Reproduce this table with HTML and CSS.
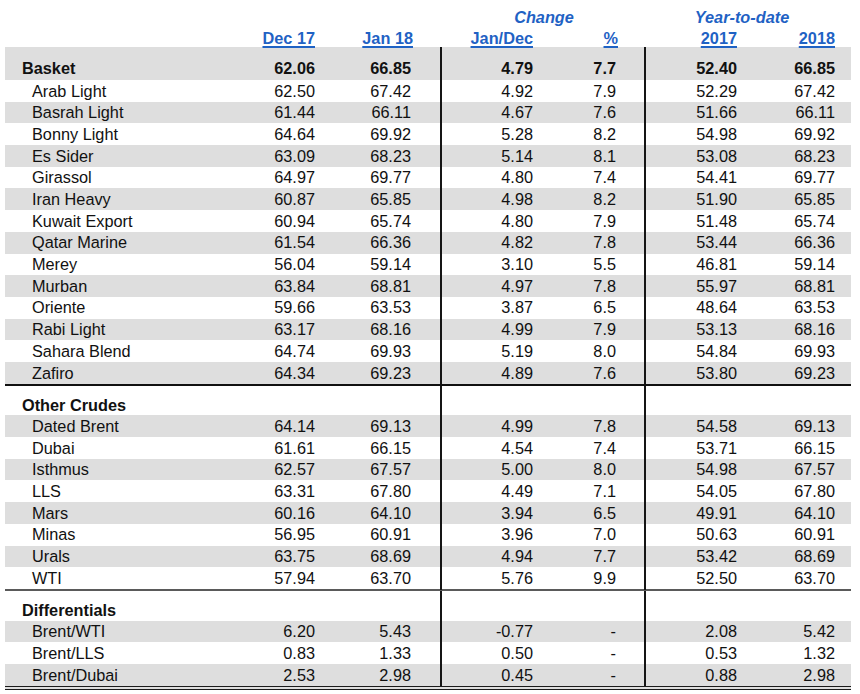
FILE: index.html
```html
<!DOCTYPE html>
<html lang="en">
<head>
<meta charset="utf-8">
<title>Crude oil prices</title>
<link rel="stylesheet" href="styles.css">
</head>
<body>
<div class="sheet">
  <div class="hrow h1">
    <div class="span-change">Change</div>
    <div class="span-ytd">Year-to-date</div>
  </div>
  <div class="hrow h2">
    <div class="c1"></div>
    <div class="c2"><u>Dec 17</u></div>
    <div class="c3"><u>Jan 18</u></div>
    <div class="c4"><u>Jan/Dec</u></div>
    <div class="c5"><u>%</u></div>
    <div class="c6"><u>2017</u></div>
    <div class="c7"><u>2018</u></div>
  </div>

  <div class="row alt top bold">
    <div class="c1">Basket</div><div class="c2">62.06</div><div class="c3">66.85</div><div class="c4">4.79</div><div class="c5">7.7</div><div class="c6">52.40</div><div class="c7">66.85</div>
  </div>
  <div class="row sub"><div class="c1">Arab Light</div><div class="c2">62.50</div><div class="c3">67.42</div><div class="c4">4.92</div><div class="c5">7.9</div><div class="c6">52.29</div><div class="c7">67.42</div></div>
  <div class="row sub alt"><div class="c1">Basrah Light</div><div class="c2">61.44</div><div class="c3">66.11</div><div class="c4">4.67</div><div class="c5">7.6</div><div class="c6">51.66</div><div class="c7">66.11</div></div>
  <div class="row sub"><div class="c1">Bonny Light</div><div class="c2">64.64</div><div class="c3">69.92</div><div class="c4">5.28</div><div class="c5">8.2</div><div class="c6">54.98</div><div class="c7">69.92</div></div>
  <div class="row sub alt"><div class="c1">Es Sider</div><div class="c2">63.09</div><div class="c3">68.23</div><div class="c4">5.14</div><div class="c5">8.1</div><div class="c6">53.08</div><div class="c7">68.23</div></div>
  <div class="row sub"><div class="c1">Girassol</div><div class="c2">64.97</div><div class="c3">69.77</div><div class="c4">4.80</div><div class="c5">7.4</div><div class="c6">54.41</div><div class="c7">69.77</div></div>
  <div class="row sub alt"><div class="c1">Iran Heavy</div><div class="c2">60.87</div><div class="c3">65.85</div><div class="c4">4.98</div><div class="c5">8.2</div><div class="c6">51.90</div><div class="c7">65.85</div></div>
  <div class="row sub"><div class="c1">Kuwait Export</div><div class="c2">60.94</div><div class="c3">65.74</div><div class="c4">4.80</div><div class="c5">7.9</div><div class="c6">51.48</div><div class="c7">65.74</div></div>
  <div class="row sub alt"><div class="c1">Qatar Marine</div><div class="c2">61.54</div><div class="c3">66.36</div><div class="c4">4.82</div><div class="c5">7.8</div><div class="c6">53.44</div><div class="c7">66.36</div></div>
  <div class="row sub"><div class="c1">Merey</div><div class="c2">56.04</div><div class="c3">59.14</div><div class="c4">3.10</div><div class="c5">5.5</div><div class="c6">46.81</div><div class="c7">59.14</div></div>
  <div class="row sub alt"><div class="c1">Murban</div><div class="c2">63.84</div><div class="c3">68.81</div><div class="c4">4.97</div><div class="c5">7.8</div><div class="c6">55.97</div><div class="c7">68.81</div></div>
  <div class="row sub"><div class="c1">Oriente</div><div class="c2">59.66</div><div class="c3">63.53</div><div class="c4">3.87</div><div class="c5">6.5</div><div class="c6">48.64</div><div class="c7">63.53</div></div>
  <div class="row sub alt"><div class="c1">Rabi Light</div><div class="c2">63.17</div><div class="c3">68.16</div><div class="c4">4.99</div><div class="c5">7.9</div><div class="c6">53.13</div><div class="c7">68.16</div></div>
  <div class="row sub"><div class="c1">Sahara Blend</div><div class="c2">64.74</div><div class="c3">69.93</div><div class="c4">5.19</div><div class="c5">8.0</div><div class="c6">54.84</div><div class="c7">69.93</div></div>
  <div class="row sub alt rule-black"><div class="c1">Zafiro</div><div class="c2">64.34</div><div class="c3">69.23</div><div class="c4">4.89</div><div class="c5">7.6</div><div class="c6">53.80</div><div class="c7">69.23</div></div>

  <div class="row section bold"><div class="c1">Other Crudes</div><div class="c2"></div><div class="c3"></div><div class="c4"></div><div class="c5"></div><div class="c6"></div><div class="c7"></div></div>
  <div class="row sub alt"><div class="c1">Dated Brent</div><div class="c2">64.14</div><div class="c3">69.13</div><div class="c4">4.99</div><div class="c5">7.8</div><div class="c6">54.58</div><div class="c7">69.13</div></div>
  <div class="row sub"><div class="c1">Dubai</div><div class="c2">61.61</div><div class="c3">66.15</div><div class="c4">4.54</div><div class="c5">7.4</div><div class="c6">53.71</div><div class="c7">66.15</div></div>
  <div class="row sub alt"><div class="c1">Isthmus</div><div class="c2">62.57</div><div class="c3">67.57</div><div class="c4">5.00</div><div class="c5">8.0</div><div class="c6">54.98</div><div class="c7">67.57</div></div>
  <div class="row sub"><div class="c1">LLS</div><div class="c2">63.31</div><div class="c3">67.80</div><div class="c4">4.49</div><div class="c5">7.1</div><div class="c6">54.05</div><div class="c7">67.80</div></div>
  <div class="row sub alt"><div class="c1">Mars</div><div class="c2">60.16</div><div class="c3">64.10</div><div class="c4">3.94</div><div class="c5">6.5</div><div class="c6">49.91</div><div class="c7">64.10</div></div>
  <div class="row sub"><div class="c1">Minas</div><div class="c2">56.95</div><div class="c3">60.91</div><div class="c4">3.96</div><div class="c5">7.0</div><div class="c6">50.63</div><div class="c7">60.91</div></div>
  <div class="row sub alt"><div class="c1">Urals</div><div class="c2">63.75</div><div class="c3">68.69</div><div class="c4">4.94</div><div class="c5">7.7</div><div class="c6">53.42</div><div class="c7">68.69</div></div>
  <div class="row sub rule-gray"><div class="c1">WTI</div><div class="c2">57.94</div><div class="c3">63.70</div><div class="c4">5.76</div><div class="c5">9.9</div><div class="c6">52.50</div><div class="c7">63.70</div></div>

  <div class="row section bold"><div class="c1">Differentials</div><div class="c2"></div><div class="c3"></div><div class="c4"></div><div class="c5"></div><div class="c6"></div><div class="c7"></div></div>
  <div class="row sub alt"><div class="c1">Brent/WTI</div><div class="c2">6.20</div><div class="c3">5.43</div><div class="c4">-0.77</div><div class="c5">-</div><div class="c6">2.08</div><div class="c7">5.42</div></div>
  <div class="row sub"><div class="c1">Brent/LLS</div><div class="c2">0.83</div><div class="c3">1.33</div><div class="c4">0.50</div><div class="c5">-</div><div class="c6">0.53</div><div class="c7">1.32</div></div>
  <div class="row sub alt rule-double"><div class="c1">Brent/Dubai</div><div class="c2">2.53</div><div class="c3">2.98</div><div class="c4">0.45</div><div class="c5">-</div><div class="c6">0.88</div><div class="c7">2.98</div></div>
</div>
</body>
</html>
```

FILE: styles.css
```css
* { box-sizing: border-box; }

html, body {
  margin: 0;
  padding: 0;
  background: #ffffff;
}

body {
  font-family: "Liberation Sans", Arial, sans-serif;
  font-size: 16.3px;
  color: #111111;
}

.sheet {
  padding: 6px 9px 0 5px;
  width: 860px;
}

.hrow,
.row {
  display: grid;
  grid-template-columns: 245px 70px 122px 96px 108px 96px 109px;
  width: 846px;
}

/* header */
.hrow {
  color: #1f62c4;
  font-weight: bold;
  text-align: right;
}

.h1 {
  height: 21px;
  line-height: 23px;
  font-style: italic;
}

.span-change {
  grid-column: 4 / 6;
  text-align: center;
}

.span-ytd {
  grid-column: 6 / 8;
  text-align: center;
  padding-right: 13px;
}

.h2 {
  height: 20px;
  line-height: 23px;
}

.hrow u {
  text-decoration-thickness: 1.5px;
  text-underline-offset: 1.5px;
}

/* columns */
.c1 { padding-left: 17px; text-align: left; white-space: nowrap; }
.c2 { padding-right: 5px; text-align: right; }
.c3 { padding-right: 29px; text-align: right; }
.c4 { padding-right: 5px; text-align: right; }
.c5 { padding-right: 28px; text-align: right; }
.c6 { padding-right: 5px; text-align: right; }
.c7 { padding-right: 16px; text-align: right; }

.row .c3,
.row .c5 {
  border-right: 2px solid #151515;
}

/* body rows */
.row {
  height: 21.7px;
  line-height: 21.7px;
}

.row > div {
  padding-top: 0.6px;
}

.row.alt {
  background: #dedede;
}

.row.sub .c1 {
  padding-left: 27px;
}

.row.bold {
  font-weight: bold;
}

.row.top {
  height: 33px;
}

.row.top > div {
  padding-top: 11.4px;
}

.row.section {
  height: 29.8px;
}

.row.section > div {
  padding-top: 9px;
}

.row.rule-black {
  height: 23.7px;
  border-bottom: 2px solid #111111;
}

.row.rule-gray {
  height: 23.7px;
  border-bottom: 2px solid #5a5a5a;
}

.row.rule-double {
  height: 25.7px;
  border-bottom: 4px double #1a1a1a;
}
```
